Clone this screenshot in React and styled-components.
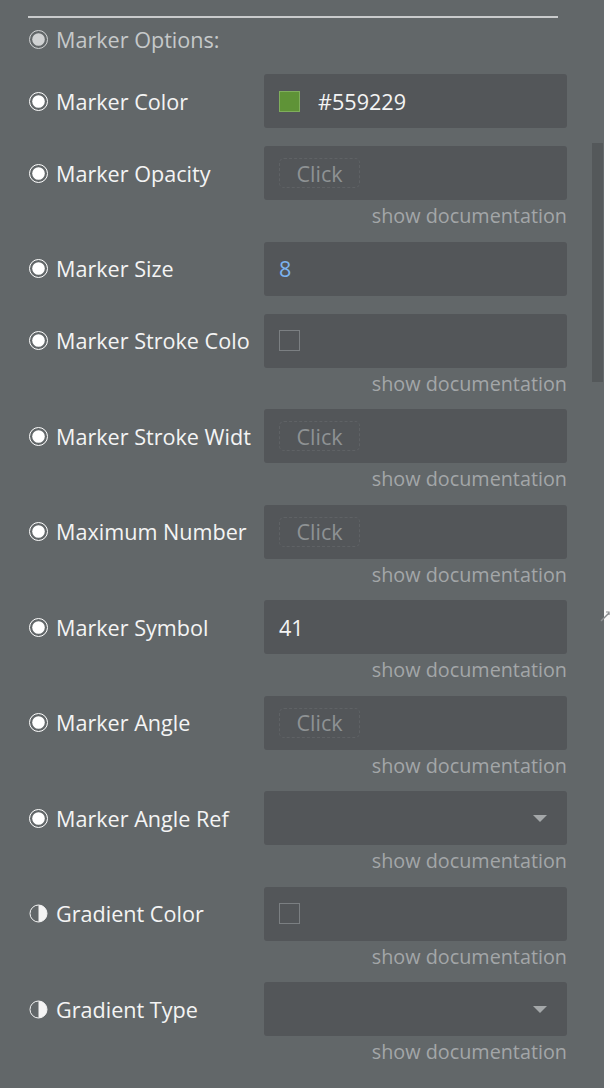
import React from "react";
import styled, { createGlobalStyle } from "styled-components";

const GlobalStyle = createGlobalStyle`
  html, body {
    margin: 0;
    padding: 0;
    background: #ffffff;
    font-family: "Open Sans", "Liberation Sans", sans-serif;
  }
`;

const Frame = styled.div`
  width: 610px;
  height: 1088px;
  display: flex;
  overflow: hidden;
`;

const Panel = styled.div`
  position: relative;
  width: 604px;
  height: 1088px;
  background: #626769;
  box-sizing: border-box;
  padding: 0 37px 0 28px;
`;

const Rule = styled.div`
  margin-top: 16px;
  height: 2px;
  background: #c9cbcc;
  width: 530px;
`;

const Header = styled.div`
  display: flex;
  align-items: center;
  height: 34px;
  margin-top: 4px;
  margin-bottom: 18px;
  color: #c6c9ca;
  font-size: 21.6px;
`;

const Row = styled.div`
  display: flex;
  align-items: center;
  height: 54px;
`;

const Label = styled.div`
  display: flex;
  align-items: center;
  width: 236px;
  color: #f4f4f4;
  font-size: 21.6px;
  white-space: nowrap;
  overflow: hidden;
`;

const Icon = styled.svg`
  width: 21px;
  height: 21px;
  margin-right: 7px;
  flex-shrink: 0;
`;

const Field = styled.div`
  width: 303px;
  height: 54px;
  background: #535659;
  border-radius: 3px;
  box-sizing: border-box;
  padding: 0 15px;
  display: flex;
  align-items: center;
  font-size: 21.6px;
  color: ${(p) => p.color || "#f4f4f4"};
`;

const ClickButton = styled.div`
  width: 81px;
  height: 30px;
  border: 1px dashed #5f6265;
  border-radius: 5px;
  box-sizing: border-box;
  display: flex;
  align-items: center;
  justify-content: center;
  color: #8e9294;
  font-size: 21.6px;
`;

const Swatch = styled.div`
  width: 21px;
  height: 21px;
  box-sizing: border-box;
  border: 1px solid ${(p) => (p.color ? "#7fae5c" : "#7b7f82")};
  background: ${(p) => p.color || "transparent"};
  margin-right: ${(p) => (p.color ? "18px" : "0")};
`;

const Caret = styled.div`
  margin-left: auto;
  margin-right: 5px;
  width: 0;
  height: 0;
  border-left: 7px solid transparent;
  border-right: 7px solid transparent;
  border-top: 7px solid #a4a7a9;
`;

const Doc = styled.div`
  width: 539px;
  text-align: right;
  color: #a3a6a8;
  font-size: 19.8px;
  line-height: 24px;
  height: 24px;
  margin-top: 4px;
`;

const Spacer = styled.div`
  height: ${(p) => p.h}px;
`;

const Scrollbar = styled.div`
  position: absolute;
  right: 1px;
  top: 143px;
  width: 11px;
  height: 239px;
  background: #54585a;
`;

const Grip = styled.svg`
  position: absolute;
  right: -6px;
  top: 610px;
  width: 10px;
  height: 12px;
`;

const Outside = styled.div`
  width: 6px;
  background: #fafafa;
`;

function Radio({ kind }) {
  if (kind === "half") {
    return (
      <Icon viewBox="0 0 21 21">
        <circle cx="10.5" cy="10.5" r="8.5" fill="none" stroke="#f4f4f4" strokeWidth="1" />
        <path d="M10.5 2 A8.5 8.5 0 0 1 10.5 19 Z" fill="#f4f4f4" />
      </Icon>
    );
  }
  const c = kind === "dim" ? "#d0d2d3" : "#ffffff";
  return (
    <Icon viewBox="0 0 21 21">
      <circle cx="10.5" cy="10.5" r="9" fill="none" stroke={c} strokeWidth="1" />
      <circle cx="10.5" cy="10.5" r="6.3" fill={c} />
    </Icon>
  );
}

const rows = [
  { label: "Marker Color", kind: "swatch", color: "#5f9337", value: "#559229" },
  { label: "Marker Opacity", kind: "click", doc: true },
  { label: "Marker Size", kind: "text", value: "8", valueColor: "#7cb3f0" },
  { label: "Marker Stroke Colo", kind: "swatch", doc: true },
  { label: "Marker Stroke Widt", kind: "click", doc: true },
  { label: "Maximum Number", kind: "click", doc: true },
  { label: "Marker Symbol", kind: "text", value: "41", doc: true },
  { label: "Marker Angle", kind: "click", doc: true },
  { label: "Marker Angle Ref", kind: "select", doc: true },
  { label: "Gradient Color", kind: "swatch", icon: "half", doc: true },
  { label: "Gradient Type", kind: "select", icon: "half", doc: true },
];

function FieldBody({ row }) {
  if (row.kind === "swatch") {
    return (
      <Field>
        <Swatch color={row.color} />
        {row.value}
      </Field>
    );
  }
  if (row.kind === "click") {
    return (
      <Field>
        <ClickButton>Click</ClickButton>
      </Field>
    );
  }
  if (row.kind === "select") {
    return (
      <Field>
        <Caret />
      </Field>
    );
  }
  return <Field color={row.valueColor}>{row.value}</Field>;
}

export default function App() {
  return (
    <Frame>
      <GlobalStyle />
      <Panel>
        <Rule />
        <Header>
          <Radio kind="dim" />
          Marker Options:
        </Header>
        {rows.map((row, i) => (
          <React.Fragment key={i}>
            <Row>
              <Label>
                <Radio kind={row.icon} />
                {row.label}
              </Label>
              <FieldBody row={row} />
            </Row>
            {row.doc && <Doc>show documentation</Doc>}
            <Spacer h={row.doc ? 13.5 : 18} />
          </React.Fragment>
        ))}
        <Scrollbar />
        <Grip viewBox="0 0 10 12">
          <path d="M1 11 L9 3" stroke="#8a8d8f" strokeWidth="1.4" />
          <path d="M6 2 L9 2 L9 5" stroke="#8a8d8f" strokeWidth="1.2" fill="none" />
        </Grip>
      </Panel>
      <Outside />
    </Frame>
  );
}
